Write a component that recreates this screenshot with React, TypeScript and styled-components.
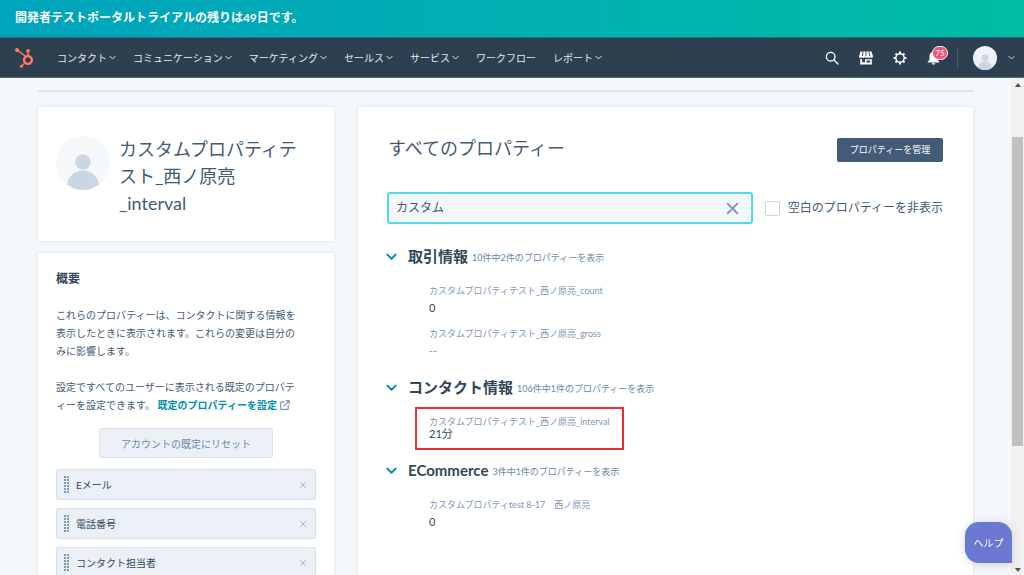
import React, { useState } from "react";
import styled, { createGlobalStyle, css } from "styled-components";
import { FaHubspot } from "react-icons/fa";

const color = {
  text: "#33475b",
  soft: "#425b76",
  muted: "#7c98b6",
  line: "#dfe6ee",
  panel: "#eaf0f6",
  page: "#f5f8fa",
  nav: "#2e3f50",
  link: "#0091ae",
};

const GlobalStyle = createGlobalStyle`
  *, *::before, *::after { box-sizing: border-box; }
  body {
    margin: 0;
    background: ${color.page};
    color: ${color.text};
    font-family: Lato, "Noto Sans CJK JP", sans-serif;
    font-size: 10px;
    overflow: hidden;
  }
  button, input { font: inherit; color: inherit; }
  button { cursor: pointer; }
  h1, h2, h3, p, ul, dl, dd { margin: 0; padding: 0; }
  svg { display: block; flex: none; }
`;

const Shell = styled.div`
  display: flex;
  flex-direction: column;
  height: 100vh;
`;

const Banner = styled.div`
  flex: none;
  padding: 9px 15px 10px;
  line-height: 18px;
  font-size: 12px;
  font-weight: 700;
  color: #fff;
  background: linear-gradient(90deg, #00a4bd, #00afb2 50%, #00bda5);
`;

const NavBar = styled.header`
  flex: none;
  display: flex;
  align-items: center;
  height: 41px;
  padding: 0 9px 0 14px;
  background: ${color.nav};
  border-top: 1px solid #1f6f80;
  border-bottom: 1px solid #56687a;
`;

const Logo = styled.a`
  display: flex;
  color: #ff7a59;
  margin-right: 23px;
`;

const Menu = styled.nav`
  display: flex;
  flex: 1;
  gap: 17px;
`;

const MenuLink = styled.a`
  display: flex;
  align-items: center;
  gap: 2px;
  line-height: 16px;
  color: #e5ebf1;
  text-decoration: none;
  white-space: nowrap;
`;

const Tools = styled.div`
  display: flex;
  align-items: center;
  gap: 18px;
`;

const IconButton = styled.button`
  position: relative;
  display: flex;
  justify-content: center;
  width: 16px;
  padding: 0;
  border: 0;
  background: none;
  color: #fff;
`;

const Badge = styled.span`
  position: absolute;
  left: 6px;
  top: -5px;
  width: 16px;
  height: 14px;
  border: 1px solid #fff;
  border-radius: 7px;
  background: #f2547d;
  font-size: 8px;
  line-height: 12px;
  text-align: center;
`;

const Account = styled.button`
  display: flex;
  align-items: center;
  gap: 11px;
  margin-left: 15px;
  padding: 0 0 0 15px;
  height: 22px;
  border: 0;
  border-left: 1px solid #425b76;
  background: none;
  color: #cbd6e2;
`;

const Body = styled.div`
  display: flex;
  flex: 1;
  min-height: 0;
`;

const Page = styled.main`
  flex: 1;
  min-width: 0;
  padding: 12px 38px 0;
  overflow: hidden;
`;

const Rule = styled.hr`
  height: 2px;
  margin: 0 0 15px;
  border: 0;
  background: #dfe5ed;
`;

const Columns = styled.div`
  display: grid;
  grid-template-columns: 296px minmax(0, 1fr);
  gap: 24px;
`;

const Side = styled.aside`
  display: flex;
  flex-direction: column;
  gap: 12px;
`;

const Card = styled.section`
  background: #fff;
  border-radius: 2px;
  box-shadow: 0 0 4px rgba(45, 62, 80, 0.12);
`;

const Profile = styled(Card)`
  display: flex;
  gap: 9px;
  padding: 29px 33px 24px 18px;
`;

const ProfileName = styled.h1`
  flex: 1;
  font-size: 18px;
  line-height: 27px;
  font-weight: 400;
  color: ${color.soft};
  line-break: loose;
`;

const NamePart = styled.span`
  display: inline-block;
`;

const Overview = styled(Card)`
  padding: 17px 18px 30px;
`;

const OverviewTitle = styled.h2`
  font-size: 12px;
  line-height: 18px;
  font-weight: 700;
`;

const Note = styled.p`
  margin-top: 18px;
  padding-right: 12px;
  line-height: 18px;
  line-break: loose;
  color: ${color.soft};
`;

const NoteLink = styled.a`
  font-weight: 700;
  color: ${color.link};
  text-decoration: none;
  svg { display: inline-block; vertical-align: -1px; margin-left: 3px; }
`;

const ResetButton = styled.button`
  display: block;
  margin: 14px auto 11px;
  width: 174px;
  height: 30px;
  padding: 0;
  border: 1px solid #d8e2ec;
  border-radius: 2px;
  background: ${color.panel};
  color: #6a88a8;
`;

const FieldList = styled.ul`
  display: grid;
  gap: 8px;
  list-style: none;
`;

const Field = styled.li`
  display: flex;
  align-items: center;
  height: 31px;
  padding: 0 8px 0 7px;
  border: 1px solid #d8e2ec;
  border-radius: 2px;
  background: ${color.panel};
`;

const FieldName = styled.span`
  flex: 1;
  margin-left: 7px;
`;

const RemoveButton = styled.button`
  display: flex;
  padding: 0;
  border: 0;
  background: none;
  color: #a4b8cd;
`;

const Properties = styled(Card)`
  min-height: 600px;
  padding: 31px 30px 30px 29px;
`;

const PropertiesHead = styled.div`
  display: flex;
  align-items: flex-start;
  justify-content: space-between;
`;

const PropertiesTitle = styled.h2`
  padding-left: 1px;
  font-size: 18px;
  line-height: 21px;
  font-weight: 400;
  color: ${color.soft};
`;

const ManageButton = styled.button`
  width: 106px;
  height: 24px;
  padding: 0 0 2px;
  border: 0;
  border-radius: 2px;
  background: #425b76;
  color: #fff;
  font-size: 9px;
`;

const Filter = styled.form`
  display: flex;
  align-items: center;
  gap: 12px;
  margin: 30px 0 22px;
`;

const SearchBox = styled.div`
  display: flex;
  align-items: center;
  flex: 1;
  height: 32px;
  padding: 0 12px 0 7px;
  border: 2px solid #4fdbe9;
  border-radius: 3px;
  background: ${color.page};
`;

const SearchInput = styled.input`
  flex: 1;
  min-width: 0;
  padding: 0;
  border: 0;
  outline: 0;
  background: none;
  font-size: 12px;
  line-height: 18px;
  color: ${color.soft};
`;

const ClearButton = styled(RemoveButton)`
  color: #7c98b6;
`;

const HideEmpty = styled.label`
  display: flex;
  align-items: center;
  gap: 8px;
  font-size: 12px;
  line-height: 18px;
  color: ${color.soft};
  white-space: nowrap;
`;

const Tick = styled.input`
  appearance: none;
  width: 15px;
  height: 15px;
  margin: 0;
  border: 1px solid #cbd6e2;
  border-radius: 2px;
  background: #fff;
  &:checked { background: ${color.link}; }
`;

const GroupHead = styled.h3`
  display: flex;
  align-items: center;
  gap: 4px;
  line-height: 20px;
`;

const GroupToggle = styled.button`
  display: flex;
  align-items: center;
  gap: 11px;
  margin-left: -1px;
  padding: 0;
  border: 0;
  background: none;
  font-size: 15px;
  font-weight: 700;
  line-height: 20px;
  svg { color: ${color.link}; }
`;

const GroupCount = styled.small`
  padding-top: 4px;
  font-size: 9px;
  line-height: 16px;
  font-weight: 400;
  color: #6a88a8;
`;

const GroupBody = styled.dl`
  display: flex;
  flex-direction: column;
  align-items: flex-start;
  gap: 14px;
  padding: 19px 0 20px 42px;
`;

const Item = styled.div<{ $marked?: boolean }>`
  display: grid;
  gap: 5px;
  line-height: 12px;
  ${(p) =>
    p.$marked &&
    css`
      position: relative;
      gap: 0;
      &::after {
        content: "";
        position: absolute;
        inset: -9px -14px -10px;
        border: 2px solid #ee2b30;
        pointer-events: none;
      }
    `}
`;

const ItemLabel = styled.dt`
  font-size: 9px;
  color: ${color.muted};
`;

const ItemValue = styled.dd<{ $empty?: boolean }>`
  font-size: 11px;
  color: ${(p) => (p.$empty ? color.muted : color.text)};
`;

const ScrollTrack = styled.div`
  display: flex;
  flex-direction: column;
  align-items: center;
  flex: none;
  width: 13px;
  padding: 5px 0 3px;
  background: #f1f1f1;
`;

const ScrollThumb = styled.div`
  flex: 308;
  width: 11px;
  margin-top: 50px;
  background: #c1c1c1;
`;

const ScrollRest = styled.div`
  flex: 122;
`;

const HelpButton = styled.button`
  position: fixed;
  right: 12px;
  bottom: 12px;
  width: 47px;
  height: 41px;
  padding: 0;
  border: 0;
  border-radius: 14px 14px 0 14px;
  background: #6a78d1;
  color: #fff;
  box-shadow: 0 1px 10px rgba(45, 62, 80, 0.2);
`;

const Chevron = ({ size = 7, weight = 1 }: { size?: number; weight?: number }) => (
  <svg width={size} height={size} viewBox="0 0 12 12" fill="none" stroke="currentColor" strokeWidth={(weight * 12) / size} strokeLinecap="round" strokeLinejoin="round" aria-hidden="true">
    <path d="M1.5 4 6 8.5 10.5 4" />
  </svg>
);

const Cross = ({ size, weight }: { size: number; weight: number }) => (
  <svg width={size} height={size} viewBox="0 0 12 12" fill="none" stroke="currentColor" strokeWidth={(weight * 12) / size} strokeLinecap="round" aria-hidden="true">
    <path d="M1.500 1.500 10.500 10.500M10.500 1.500 1.500 10.500" />
  </svg>
);

const Person = ({ size, id, back }: { size: number; id: string; back: string }) => (
  <svg width={size} height={size} viewBox="0 0 54 54" aria-hidden="true">
    <clipPath id={id}>
      <circle cx="27" cy="27" r="27" />
    </clipPath>
    <g clipPath={`url(#${id})`}>
      <rect width="54" height="54" fill={back} />
      <circle cx="27" cy="26" r="7.7" fill="#cbd6e5" />
      <path d="M11 50a16 15.5 0 0 1 32 0v4H11z" fill="#cbd6e5" />
    </g>
  </svg>
);

const SearchIcon = () => (
  <svg width="14" height="14" viewBox="0 0 14 14" fill="none" stroke="currentColor" strokeWidth="1.3" strokeLinecap="round" aria-hidden="true">
    <circle cx="5.7" cy="5.7" r="4.3" />
    <path d="m9 9 4 4" />
  </svg>
);

const StoreIcon = () => (
  <svg width="14" height="14" viewBox="0 0 14 14" fill="currentColor" aria-hidden="true">
    <path d="M1.5.5h11L14 5.200c0 1.100-.6 1.700-1.500 1.700S11 6.300 11 5.700c0 .7-.6 1.200-1.300 1.200S8.300 6.400 8.300 5.700c0 .7-.6 1.200-1.300 1.200s-1.300-.5-1.300-1.200c0 .7-.6 1.200-1.400 1.200S3 6.400 3 5.700c0 .6-.6 1.200-1.500 1.200S0 6.300 0 5.200z" />
    <path d="M1.200 7.900h2v3.300H6V8.300h6.800v5.200H1.200zM7.600 9.500v2h3.600v-2z" fillRule="evenodd" />
    <path d="M4.100.5 3.300 5M7 .5V5M9.900.5l.8 4.500" stroke={color.nav} strokeWidth=".9" />
  </svg>
);

const GearIcon = () => (
  <svg width="14" height="14" viewBox="0 0 14 14" fill="none" stroke="currentColor" aria-hidden="true">
    <circle cx="7" cy="7" r="4.200" strokeWidth="1.500" />
    {[0, 45, 90, 135, 180, 225, 270, 315].map((a) => (
      <path key={a} d="M7 2.600V.6" strokeWidth="2" transform={`rotate(${a} 7 7)`} />
    ))}
  </svg>
);

const BellIcon = () => (
  <svg width="14" height="14" viewBox="0 0 14 14" fill="currentColor" aria-hidden="true">
    <path d="M6.500 1c2.400 0 4 1.600 4 4v2.500c0 1.500.6 2.300 1.800 3.200v.8H.7v-.8c1.200-.9 1.800-1.700 1.800-3.200V5c0-2.400 1.600-4 4-4zM4.700 12.300h3.600c0 .8-.8 1.400-1.800 1.400s-1.800-.6-1.800-1.400z" />
  </svg>
);

const ExternalIcon = () => (
  <svg width="10" height="10" viewBox="0 0 10 10" fill="none" stroke="#7c98b6" strokeWidth="1.200" strokeLinecap="round" strokeLinejoin="round" aria-hidden="true">
    <path d="M4.300 1.800H1.600a.9.9 0 0 0-.9.9v5.700c0 .5.4.9.9.9h5.700c.5 0 .9-.4.9-.9V5.700M6.200.7h3.100v3.100M9.100.9 3.900 6.100" />
  </svg>
);

const GripIcon = () => (
  <svg width="5" height="18" viewBox="0 0 5 18" fill="#7c98b6" aria-hidden="true">
    {[0, 3, 6, 9, 12, 15].map((y) => (
      <path key={y} d={`M0 ${y}h2v2H0zM3 ${y}h2v2H3z`} />
    ))}
  </svg>
);

const Arrow = ({ down }: { down?: boolean }) => (
  <svg width="6" height="4" viewBox="0 0 6 4" fill="#505050" aria-hidden="true">
    <path d={down ? "M0 0h6L3 4z" : "M0 4h6L3 0z"} />
  </svg>
);

const menu = [
  { name: "コンタクト", opens: true },
  { name: "コミュニケーション", opens: true },
  { name: "マーケティング", opens: true },
  { name: "セールス", opens: true },
  { name: "サービス", opens: true },
  { name: "ワークフロー", opens: false },
  { name: "レポート", opens: true },
];

const fields = ["Eメール", "電話番号", "コンタクト担当者"];

type Property = { label: string; value: string; marked?: boolean };

const groups: { name: string; count: string; items: Property[] }[] = [
  {
    name: "取引情報",
    count: "10件中2件のプロパティーを表示",
    items: [
      { label: "カスタムプロパティテスト_西ノ原亮_count", value: "0" },
      { label: "カスタムプロパティテスト_西ノ原亮_gross", value: "--" },
    ],
  },
  {
    name: "コンタクト情報",
    count: "106件中1件のプロパティーを表示",
    items: [{ label: "カスタムプロパティテスト_西ノ原亮_interval", value: "21分", marked: true }],
  },
  {
    name: "ECommerce",
    count: "3件中1件のプロパティーを表示",
    items: [{ label: "カスタムプロパティtest 8-17　西ノ原亮", value: "0" }],
  },
];

export default function App() {
  const [query, setQuery] = useState("カスタム");

  return (
    <Shell lang="ja">
      <GlobalStyle />
      <Banner>開発者テストポータルトライアルの残りは49日です。</Banner>
      <NavBar>
        <Logo href="#" aria-label="HubSpot">
          <FaHubspot size={20} />
        </Logo>
        <Menu>
          {menu.map((m) => (
            <MenuLink href="#" key={m.name}>
              {m.name}
              {m.opens && <Chevron />}
            </MenuLink>
          ))}
        </Menu>
        <Tools>
          <IconButton aria-label="検索"><SearchIcon /></IconButton>
          <IconButton aria-label="マーケットプレイス"><StoreIcon /></IconButton>
          <IconButton aria-label="設定"><GearIcon /></IconButton>
          <IconButton aria-label="通知">
            <BellIcon />
            <Badge>75</Badge>
          </IconButton>
        </Tools>
        <Account aria-label="アカウント">
          <Person size={24} id="account-clip" back="#eef2f7" />
          <Chevron />
        </Account>
      </NavBar>
      <Body>
        <Page>
          <Rule />
          <Columns>
            <Side>
              <Profile>
                <Person size={54} id="profile-clip" back={color.page} />
                <ProfileName>
                  カスタムプロパティテスト_西ノ原亮<NamePart>_interval</NamePart>
                </ProfileName>
              </Profile>
              <Overview>
                <OverviewTitle>概要</OverviewTitle>
                <Note>
                  これらのプロパティーは、コンタクトに関する情報を表示したときに表示されます。これらの変更は自分のみに影響します。
                </Note>
                <Note>
                  設定ですべてのユーザーに表示される既定のプロパティーを設定できます。{" "}
                  <NoteLink href="#">既定のプロパティーを設定<ExternalIcon /></NoteLink>
                </Note>
                <ResetButton>アカウントの既定にリセット</ResetButton>
                <FieldList>
                  {fields.map((f) => (
                    <Field key={f}>
                      <GripIcon />
                      <FieldName>{f}</FieldName>
                      <RemoveButton aria-label={`${f}を削除`}><Cross size={8} weight={1} /></RemoveButton>
                    </Field>
                  ))}
                </FieldList>
              </Overview>
            </Side>
            <Properties>
              <PropertiesHead>
                <PropertiesTitle>すべてのプロパティー</PropertiesTitle>
                <ManageButton>プロパティーを管理</ManageButton>
              </PropertiesHead>
              <Filter onSubmit={(e) => e.preventDefault()}>
                <SearchBox>
                  <SearchInput aria-label="プロパティーを検索" value={query} onChange={(e) => setQuery(e.target.value)} />
                  <ClearButton type="button" aria-label="クリア" onClick={() => setQuery("")}>
                    <Cross size={13} weight={2} />
                  </ClearButton>
                </SearchBox>
                <HideEmpty>
                  <Tick type="checkbox" />
                  空白のプロパティーを非表示
                </HideEmpty>
              </Filter>
              {groups.map((g) => (
                <section key={g.name}>
                  <GroupHead>
                    <GroupToggle aria-expanded="true">
                      <Chevron size={11} weight={2} />
                      {g.name}
                    </GroupToggle>
                    <GroupCount>{g.count}</GroupCount>
                  </GroupHead>
                  <GroupBody>
                    {g.items.map((i) => (
                      <Item key={i.label} $marked={i.marked}>
                        <ItemLabel>{i.label}</ItemLabel>
                        <ItemValue $empty={i.value === "--"}>{i.value}</ItemValue>
                      </Item>
                    ))}
                  </GroupBody>
                </section>
              ))}
            </Properties>
          </Columns>
        </Page>
        <ScrollTrack aria-hidden="true">
          <Arrow />
          <ScrollThumb />
          <ScrollRest />
          <Arrow down />
        </ScrollTrack>
      </Body>
      <HelpButton>ヘルプ</HelpButton>
    </Shell>
  );
}
